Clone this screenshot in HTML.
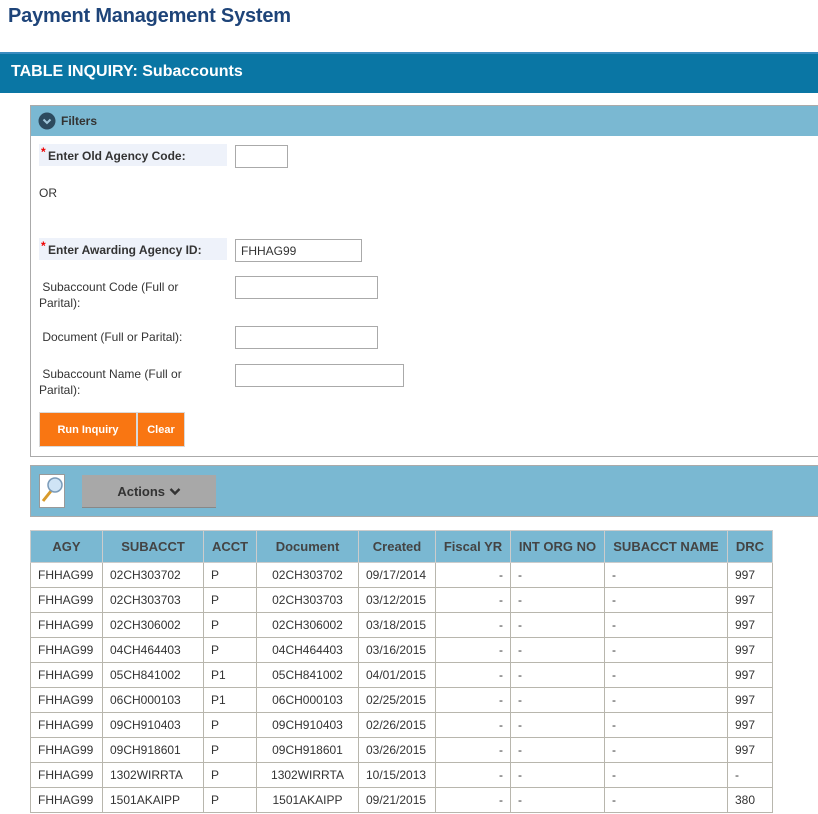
<!DOCTYPE html>
<html><head><style>
*{margin:0;padding:0;box-sizing:border-box}
body{width:818px;height:814px;overflow:hidden;background:#fff;font-family:"Liberation Sans",Arial,sans-serif;position:relative;color:#333}
.a{position:absolute}
h1{position:absolute;left:8px;top:5px;font-size:20px;color:#1e4479;font-weight:bold;letter-spacing:-0.2px}
.bar{left:0;top:52px;width:818px;height:41px;background:#0a76a4;border-top:2px solid #3a8cc0}
.bar span{position:absolute;left:11px;top:9px;color:#fff;font-weight:bold;font-size:16px}
.filt{left:30px;top:105px;width:800px;height:352px;border:1px solid #aaa}
.fh{position:absolute;left:0;top:0;width:100%;height:30px;background:#7ab8d2}
.lbl{background:#eef2fa;font-size:12px;font-weight:bold;color:#333;height:22px;padding:5px 0 0 9px;width:188px}
.star{color:#e00;position:absolute;left:2px;top:1px;font-size:12px}
.inp{border:1px solid #aaa;height:23px;background:#fff;font-size:12px;padding:4px 5px}
.t{font-size:12px;color:#333;line-height:16px}
.btn{background:#f97612;color:#fff;font-size:11px;font-weight:bold;height:35px;top:412px;text-align:center;line-height:35px;border:1px solid #d9d9d9}
.act{left:30px;top:465px;width:800px;height:52px;background:#7ab8d2;border:1px solid #aaa}
table{position:absolute;left:30px;top:530px;border-collapse:collapse;font-size:12px}
td,th{border:1px solid #b8b6ad;height:25px;padding:0 7px;white-space:nowrap}
th{background:#7ab8d2;color:#444;font-size:13px;height:32px;border-color:#ccc}
</style></head><body>
<h1>Payment Management System</h1>
<div class="a bar"><span>TABLE INQUIRY: Subaccounts</span></div>
<div class="a filt">
 <div class="fh">
  <svg class="a" style="left:7px;top:6px" width="18" height="18" viewBox="0 0 18 18"><circle cx="9" cy="9" r="8.5" fill="#2d4a5e"/><path d="M5.5 7.5l3.5 3.5 3.5-3.5" stroke="#9fc5d8" stroke-width="2" fill="none"/></svg>
  <span class="a" style="left:30px;top:8px;font-size:12px;font-weight:bold;color:#333">Filters</span>
 </div>
</div>
<div class="a lbl" style="left:39px;top:144px"><span class="star">*</span>Enter Old Agency Code:</div>
<div class="a inp" style="left:235px;top:145px;width:53px"></div>
<div class="a t" style="left:39px;top:185px">OR</div>
<div class="a lbl" style="left:39px;top:238px"><span class="star">*</span>Enter Awarding Agency ID:</div>
<div class="a inp" style="left:235px;top:239px;width:127px">FHHAG99</div>
<div class="a t" style="left:39px;top:279px">&nbsp;Subaccount Code (Full or<br>Parital):</div>
<div class="a inp" style="left:235px;top:276px;width:143px"></div>
<div class="a t" style="left:39px;top:329px">&nbsp;Document (Full or Parital):</div>
<div class="a inp" style="left:235px;top:326px;width:143px"></div>
<div class="a t" style="left:39px;top:366px">&nbsp;Subaccount Name (Full or<br>Parital):</div>
<div class="a inp" style="left:235px;top:364px;width:169px"></div>
<div class="a btn" style="left:39px;width:98px">Run Inquiry</div>
<div class="a btn" style="left:137px;width:48px">Clear</div>
<div class="a act">
 <div class="a" style="left:8px;top:8px;width:26px;height:34px;background:#fff;border:1px solid #999">
  <svg width="24" height="32" viewBox="0 0 24 32"><line x1="3" y1="26" x2="11" y2="16" stroke="#d89a2a" stroke-width="3"/><circle cx="15" cy="10" r="7" fill="#cfe4f5" stroke="#7a9ab8" stroke-width="1.5"/></svg>
 </div>
 <div class="a" style="left:51px;top:9px;width:134px;height:33px;background:#a8a8a8;border-bottom:1px solid #888;text-align:center;line-height:33px;font-size:13px;font-weight:bold;color:#333">Actions <svg width="12" height="9" viewBox="0 0 12 9"><path d="M1.5 2l4.5 4.5 4.5-4.5" stroke="#333" stroke-width="2.4" fill="none"/></svg></div>
</div>
<table>
<tr><th style="width:72px">AGY</th><th style="width:101px">SUBACCT</th><th style="width:53px">ACCT</th><th style="width:102px">Document</th><th style="width:77px">Created</th><th style="width:75px">Fiscal YR</th><th style="width:94px">INT ORG NO</th><th style="width:123px">SUBACCT NAME</th><th style="width:45px">DRC</th></tr>
<tr><td>FHHAG99</td><td>02CH303702</td><td>P</td><td align="center">02CH303702</td><td>09/17/2014</td><td align="right">-</td><td>-</td><td>-</td><td>997</td></tr>
<tr><td>FHHAG99</td><td>02CH303703</td><td>P</td><td align="center">02CH303703</td><td>03/12/2015</td><td align="right">-</td><td>-</td><td>-</td><td>997</td></tr>
<tr><td>FHHAG99</td><td>02CH306002</td><td>P</td><td align="center">02CH306002</td><td>03/18/2015</td><td align="right">-</td><td>-</td><td>-</td><td>997</td></tr>
<tr><td>FHHAG99</td><td>04CH464403</td><td>P</td><td align="center">04CH464403</td><td>03/16/2015</td><td align="right">-</td><td>-</td><td>-</td><td>997</td></tr>
<tr><td>FHHAG99</td><td>05CH841002</td><td>P1</td><td align="center">05CH841002</td><td>04/01/2015</td><td align="right">-</td><td>-</td><td>-</td><td>997</td></tr>
<tr><td>FHHAG99</td><td>06CH000103</td><td>P1</td><td align="center">06CH000103</td><td>02/25/2015</td><td align="right">-</td><td>-</td><td>-</td><td>997</td></tr>
<tr><td>FHHAG99</td><td>09CH910403</td><td>P</td><td align="center">09CH910403</td><td>02/26/2015</td><td align="right">-</td><td>-</td><td>-</td><td>997</td></tr>
<tr><td>FHHAG99</td><td>09CH918601</td><td>P</td><td align="center">09CH918601</td><td>03/26/2015</td><td align="right">-</td><td>-</td><td>-</td><td>997</td></tr>
<tr><td>FHHAG99</td><td>1302WIRRTA</td><td>P</td><td align="center">1302WIRRTA</td><td>10/15/2013</td><td align="right">-</td><td>-</td><td>-</td><td>-</td></tr>
<tr><td>FHHAG99</td><td>1501AKAIPP</td><td>P</td><td align="center">1501AKAIPP</td><td>09/21/2015</td><td align="right">-</td><td>-</td><td>-</td><td>380</td></tr>
</table>
</body></html>
